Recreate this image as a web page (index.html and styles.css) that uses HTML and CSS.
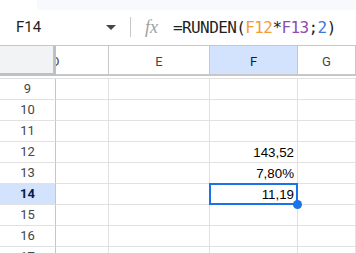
FILE: index.html
```html
<!DOCTYPE html>
<html lang="de">
<head>
    <meta charset="UTF-8">
    <meta name="viewport" content="width=device-width, initial-scale=1.0">
    <title>Tabelle</title>
    <link rel="stylesheet" href="styles.css">
</head>
<body>
    <!-- Rest der Symbolleiste -->
    <div class="toolbar-edge"></div>

    <!-- Bearbeitungsleiste -->
    <div class="formula-bar">
        <div class="name-box">
            <span>F14</span>
            <span class="caret"></span>
        </div>
        <div class="divider"></div>
        <span class="fx">fx</span>
        <div class="formula">=RUNDEN(<span class="ref-a">F12</span>*<span class="ref-b">F13</span>;<span class="num">2</span>)</div>
    </div>

    <!-- Tabellenblatt -->
    <div class="sheet">
        <div class="row col-heads">
            <div class="corner"></div>
            <div class="col-head scrolled"><span>D</span></div>
            <div class="col-head">E</div>
            <div class="col-head active">F</div>
            <div class="col-head">G</div>
        </div>
        <div class="freeze"></div>

        <div class="row"><div class="row-head">9</div><div class="cell"></div><div class="cell"></div><div class="cell"></div><div class="cell"></div></div>
        <div class="row"><div class="row-head">10</div><div class="cell"></div><div class="cell"></div><div class="cell"></div><div class="cell"></div></div>
        <div class="row"><div class="row-head">11</div><div class="cell"></div><div class="cell"></div><div class="cell"></div><div class="cell"></div></div>
        <div class="row"><div class="row-head">12</div><div class="cell"></div><div class="cell"></div><div class="cell">143,52</div><div class="cell"></div></div>
        <div class="row"><div class="row-head">13</div><div class="cell"></div><div class="cell"></div><div class="cell">7,80%</div><div class="cell"></div></div>
        <div class="row"><div class="row-head active">14</div><div class="cell"></div><div class="cell"></div><div class="cell selected">11,19<span class="selection"><span class="handle"></span></span></div><div class="cell"></div></div>
        <div class="row"><div class="row-head">15</div><div class="cell"></div><div class="cell"></div><div class="cell"></div><div class="cell"></div></div>
        <div class="row"><div class="row-head">16</div><div class="cell"></div><div class="cell"></div><div class="cell"></div><div class="cell"></div></div>
        <div class="row"><div class="row-head">17</div><div class="cell"></div><div class="cell"></div><div class="cell"></div><div class="cell"></div></div>
    </div>
</body>
</html>
```

FILE: styles.css
```css
* { margin: 0; padding: 0; box-sizing: border-box; }
body { background: #fff; font-family: Roboto, 'Liberation Sans', sans-serif; color: #1f1f1f; height: 253px; overflow: hidden; }

/* Symbolleiste */
.toolbar-edge { height: 10px; margin-left: 37px; background: #f7f9fc; }

/* Bearbeitungsleiste */
.formula-bar { height: 36px; display: flex; align-items: center; border-bottom: 1px solid #c4c7c5; padding-bottom: 1px; }
.name-box { width: 121px; display: flex; align-items: center; justify-content: space-between; padding: 0 5px 0 16px; font-size: 15px; }
.caret { width: 0; height: 0; border-left: 5px solid transparent; border-right: 5px solid transparent; border-top: 5px solid #444746; }
.divider { width: 1px; height: 20px; background: #c7c7c7; margin-left: 9px; }
.fx { margin-left: 14px; width: 18px; font-family: 'Liberation Serif', serif; font-style: italic; font-size: 18px; color: #a0a0a0; }
.formula { margin-left: 10px; font-family: 'DejaVu Sans Mono', monospace; font-size: 16px; letter-spacing: -0.6px; color: #1f1f1f; white-space: nowrap; }
.ref-a { color: #f29c38; }
.ref-b { color: #8e4cb0; }
.num { color: #3c78d8; }

/* Raster */
.row { display: grid; grid-template-columns: 56px 53px 101px 88px 1fr; height: 21px; }
.col-heads { height: 30px; }
.corner { background: #f1f3f4; border-right: 3px solid #bdc1c6; border-bottom: 3px solid #bdc1c6; }
.col-head { border-right: 1px solid #c7c7c7; border-bottom: 2px solid #c7c7c7; font-size: 13px; color: #444746; text-align: center; padding-top: 8px; overflow: hidden; white-space: nowrap; }
.col-head.scrolled { text-align: left; }
.col-head.scrolled span { display: inline-block; margin-left: -5px; }
.col-head.active { background: #d3e3fd; color: #041e49; }
.freeze { height: 3px; border-bottom: 1px solid #e1e1e1; }

.row-head { border-right: 1px solid #c4c7c5; border-bottom: 1px solid #e1e1e1; font-size: 13px; line-height: 20px; text-align: center; color: #444746; }
.row-head.active { background: #d3e3fd; color: #041e49; font-weight: 700; }
.cell { border-right: 1px solid #e1e1e1; border-bottom: 1px solid #e1e1e1; font-family: 'Liberation Sans', Arial, sans-serif; font-size: 13.33px; line-height: 16px; padding: 3px 3px 0; text-align: right; color: #000; }

/* Auswahl */
.selected { position: relative; }
.selection { position: absolute; top: -1px; left: -1px; right: -1px; bottom: -1px; border: 2px solid #1a73e8; }
.handle { position: absolute; right: -6px; bottom: -6px; width: 9px; height: 9px; border-radius: 50%; background: #1a73e8; }
```
